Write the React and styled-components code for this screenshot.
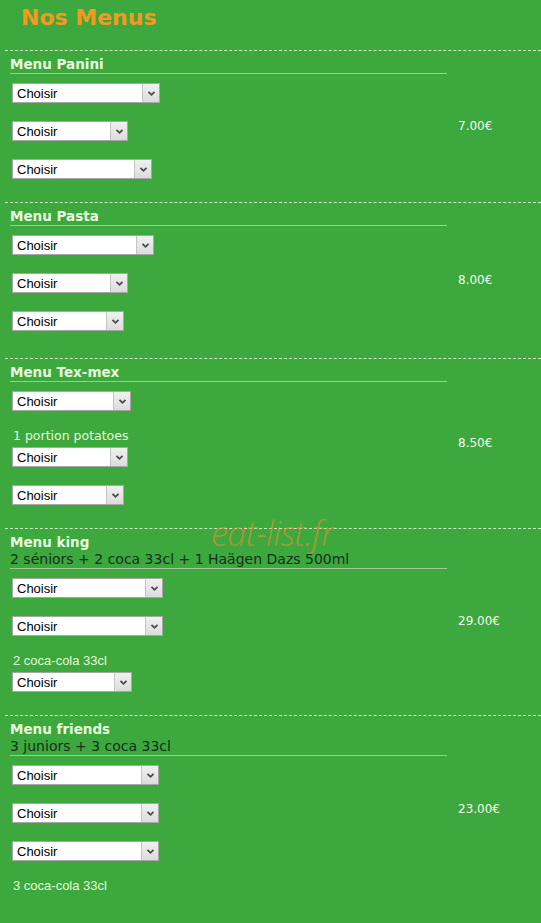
import React from "react";
import styled, { createGlobalStyle } from "styled-components";

const GlobalStyle = createGlobalStyle`
  html, body {
    margin: 0;
    padding: 0;
    background: #3da83d;
  }
  body {
    font-family: "DejaVu Sans", Verdana, sans-serif;
  }
`;

const Page = styled.div`
  position: relative;
  width: 541px;
  min-height: 923px;
  background: #3da83d;
  overflow: hidden;
`;

const PageTitle = styled.h1`
  margin: 0;
  padding: 5px 0 0 21px;
  height: 50px;
  box-sizing: border-box;
  font-family: "DejaVu Sans", Verdana, sans-serif;
  font-weight: bold;
  font-size: 22px;
  line-height: 26px;
  color: #f39a1e;
`;

const MenuList = styled.div`
  margin-left: 5px;
`;

const Section = styled.section`
  display: grid;
  grid-template-columns: 442px 1fr;
  border-top: 1px dashed #cdeec4;
`;

const Left = styled.div`
  padding: 5px 0 ${(p) => p.$pb || 23}px 5px;
`;

const Header = styled.div`
  border-bottom: 1px solid #a2c89a;
  margin-bottom: 9px;
`;

const Title = styled.h2`
  margin: 0;
  font-size: 13.5px;
  line-height: 17px;
  font-weight: bold;
  color: #e8fbdf;
`;

const Subtitle = styled.div`
  font-size: 14px;
  line-height: 17px;
  color: #12301a;
`;

const Items = styled.div`
  display: flex;
  flex-direction: column;
  gap: 18px;
  padding-left: 2px;
`;

const Item = styled.div`
  display: flex;
  flex-direction: column;
  gap: 4px;
`;

const Note = styled.div`
  font-family: ${(p) =>
    p.$arial ? '"Liberation Sans", Arial, sans-serif' : '"DejaVu Sans", Verdana, sans-serif'};
  font-size: ${(p) => (p.$arial ? 13 : 12.5)}px;
  line-height: 14px;
  color: #e3fad8;
  padding-left: 1px;
`;

const Price = styled.div`
  display: flex;
  align-items: center;
  padding: 0 0 2px 11px;
  font-size: 12px;
  color: #f2fbee;
`;

const SelectBox = styled.div`
  display: inline-flex;
  width: ${(p) => p.$w}px;
  height: 20px;
  box-sizing: border-box;
  border: 1px solid #a6a6a6;
  background: #fff;
`;

const NativeSelect = styled.select`
  appearance: none;
  -webkit-appearance: none;
  flex: 1;
  min-width: 0;
  border: none;
  outline: none;
  background: transparent;
  padding: 0 0 0 4px;
  font-family: "Liberation Sans", Arial, sans-serif;
  font-size: 13px;
  color: #000;
`;

const ArrowButton = styled.span`
  width: 16px;
  display: flex;
  align-items: center;
  justify-content: center;
  background: linear-gradient(#f1f1f1, #dcdcdc);
  border-left: 1px solid #c4c4c4;
`;

const Watermark = styled.div`
  position: absolute;
  left: 211px;
  top: 510px;
  font-family: "Open Sans", sans-serif;
  font-style: italic;
  font-weight: 300;
  font-size: 34px;
  letter-spacing: -0.5px;
  color: rgba(236, 140, 60, 0.6);
  pointer-events: none;
`;

const Chevron = () => (
  <svg width="9" height="7" viewBox="0 0 9 7">
    <path d="M1.5 1.8 L4.5 4.8 L7.5 1.8" fill="none" stroke="#4a4a4a" strokeWidth="1.8" />
  </svg>
);

const Choice = ({ width }) => (
  <SelectBox $w={width}>
    <NativeSelect defaultValue="c">
      <option value="c">Choisir</option>
    </NativeSelect>
    <ArrowButton>
      <Chevron />
    </ArrowButton>
  </SelectBox>
);

const menus = [
  { name: "Menu Panini", price: "7.00€", items: [{ w: 148 }, { w: 116 }, { w: 140 }] },
  { name: "Menu Pasta", price: "8.00€", pb: 27, items: [{ w: 142 }, { w: 116 }, { w: 112 }] },
  {
    name: "Menu Tex-mex",
    price: "8.50€",
    items: [{ w: 119 }, { w: 116, note: "1 portion potatoes" }, { w: 112 }],
  },
  {
    name: "Menu king",
    sub: "2 séniors + 2 coca 33cl + 1 Haägen Dazs 500ml",
    price: "29.00€",
    items: [{ w: 151 }, { w: 151 }, { w: 120, note: "2 coca-cola 33cl", arial: true }],
  },
  {
    name: "Menu friends",
    sub: "3 juniors + 3 coca 33cl",
    price: "23.00€",
    pb: 10,
    items: [{ w: 147 }, { w: 147 }, { w: 147 }, { note: "3 coca-cola 33cl", arial: true }],
  },
];

export default function App() {
  return (
    <Page>
      <GlobalStyle />
      <PageTitle>Nos Menus</PageTitle>
      <MenuList>
        {menus.map((m) => (
          <Section key={m.name}>
            <Left $pb={m.pb}>
              <Header>
                <Title>{m.name}</Title>
                {m.sub && <Subtitle>{m.sub}</Subtitle>}
              </Header>
              <Items>
                {m.items.map((it, i) => (
                  <Item key={i}>
                    {it.note && <Note $arial={it.arial}>{it.note}</Note>}
                    {it.w && <Choice width={it.w} />}
                  </Item>
                ))}
              </Items>
            </Left>
            <Price>{m.price}</Price>
          </Section>
        ))}
      </MenuList>
      <Watermark>eat-list.fr</Watermark>
    </Page>
  );
}
